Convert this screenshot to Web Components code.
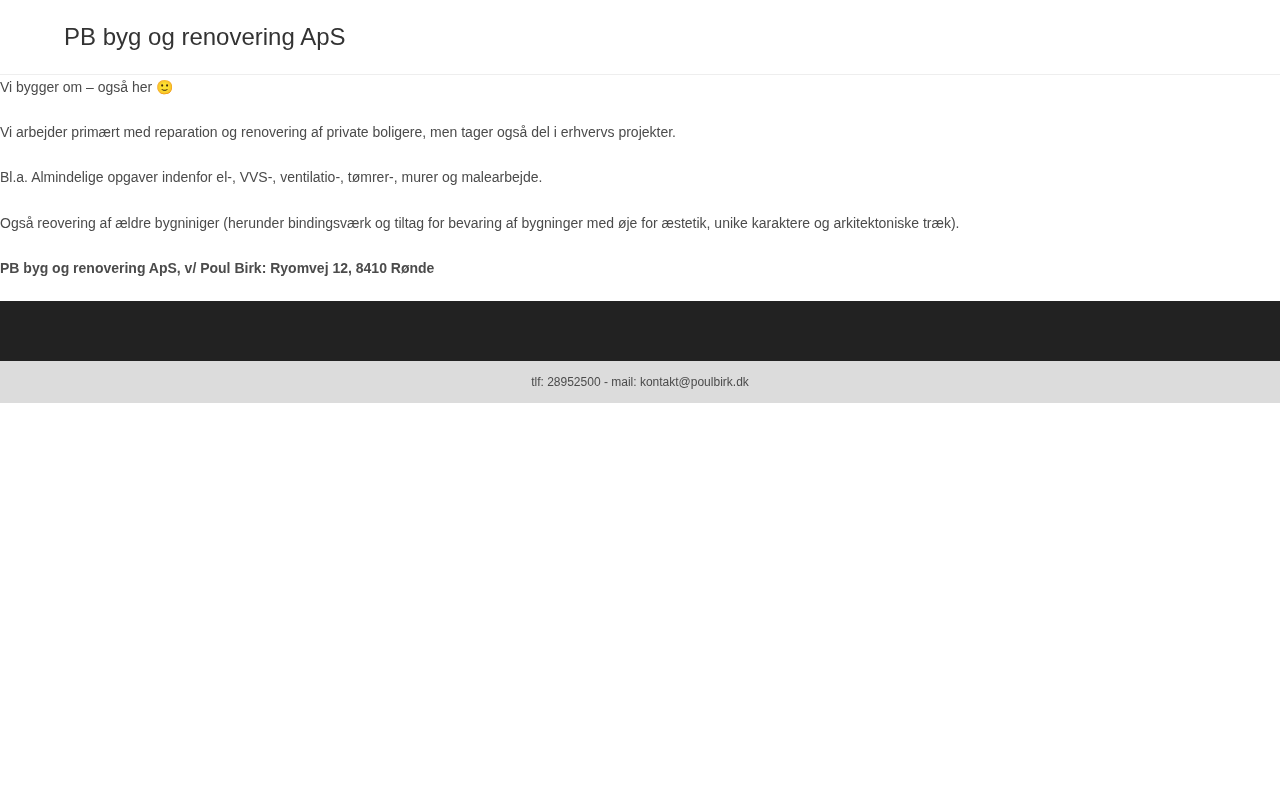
<!DOCTYPE html>
<html lang="da">
<head>
<meta charset="utf-8">
<title>PB byg og renovering ApS</title>
<style>
  html, body { margin: 0; padding: 0; background: #fff; }
  body { font-family: "Liberation Sans", Arial, sans-serif; }
</style>
</head>
<body>
<site-header>PB byg og renovering ApS</site-header>
<site-content>
  <p>Vi bygger om – også her <span class="emoji" style="font-family:'Noto Color Emoji',sans-serif">🙂</span></p>
  <p>Vi arbejder primært med reparation og renovering af private boligere, men tager også del i erhvervs projekter.</p>
  <p>Bl.a. Almindelige opgaver indenfor el-, VVS-, ventilatio-, tømrer-, murer og malearbejde.</p>
  <p>Også reovering af ældre bygniniger (herunder bindingsværk og tiltag for bevaring af bygninger med øje for æstetik, unike karaktere og arkitektoniske træk).</p>
  <p><b>PB byg og renovering ApS, v/ Poul Birk: Ryomvej 12, 8410 Rønde</b></p>
</site-content>
<site-footer>tlf: 28952500 - mail: kontakt@poulbirk.dk</site-footer>
<script>
// sidehoved med firmanavn
class SiteHeader extends HTMLElement {
  constructor() {
    super();
    this.attachShadow({ mode: 'open' });
    this.shadowRoot.innerHTML = `
      <style>
        :host { display: block; height: 74px; border-bottom: 1px solid #eee; }
        .title { padding-left: 64px; font-size: 24px; line-height: 74px; color: #333; will-change: opacity; }
      </style>
      <div class="title"><slot></slot></div>
    `;
  }
}

// indhold
class SiteContent extends HTMLElement {
  constructor() {
    super();
    this.attachShadow({ mode: 'open' });
    this.shadowRoot.innerHTML = `
      <style>
        :host { display: block; font-size: 14px; line-height: 25.2px; color: #4b4b4b; }
        .wrap { height: 226px; overflow: hidden; will-change: opacity; }
        ::slotted(p) { margin: 0 0 20px; }
      </style>
      <div class="wrap"><slot></slot></div>
    `;
  }
}

// sort bjaelke + kontaktlinje
class SiteFooter extends HTMLElement {
  constructor() {
    super();
    this.attachShadow({ mode: 'open' });
    this.shadowRoot.innerHTML = `
      <style>
        :host { display: block; }
        .dark { height: 60px; background: #222; }
        .info { height: 42px; line-height: 42px; background: #dcdcdc; color: #4b4b4b; font-size: 12px; text-align: center; }
        .info span { display: block; will-change: opacity; }
      </style>
      <div class="dark"></div>
      <div class="info"><span><slot></slot></span></div>
    `;
  }
}

customElements.define('site-header', SiteHeader);
customElements.define('site-content', SiteContent);
customElements.define('site-footer', SiteFooter);
</script>
</body>
</html>
